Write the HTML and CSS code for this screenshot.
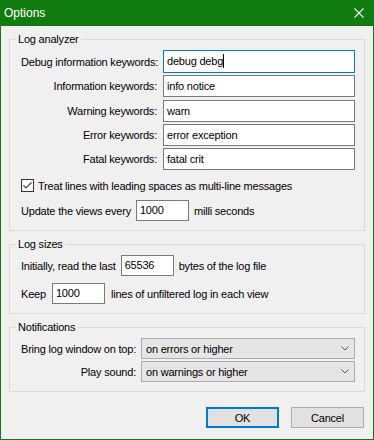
FILE: index.html
```html
<!DOCTYPE html>
<html lang="en">
<head>
    <meta charset="UTF-8">
    <title>Options</title>
    <link rel="stylesheet" href="styles.css">
</head>
<body>
    <div class="window">
        <div class="titlebar">
            <span class="title">Options</span>
            <svg class="close" width="10" height="10" viewBox="0 0 10 10">
                <path d="M0.5 0.5 L9.5 9.5 M9.5 0.5 L0.5 9.5" stroke="#fff" stroke-width="1.1" fill="none"/>
            </svg>
        </div>

        <div class="content">
            <fieldset class="group">
                <legend>Log analyzer</legend>
                <div class="keyword-grid">
                    <span class="label">Debug information keywords:</span>
                    <div class="field focused">debug debg<span class="caret"></span></div>
                    <span class="label">Information keywords:</span>
                    <div class="field">info notice</div>
                    <span class="label">Warning keywords:</span>
                    <div class="field">warn</div>
                    <span class="label">Error keywords:</span>
                    <div class="field">error exception</div>
                    <span class="label">Fatal keywords:</span>
                    <div class="field">fatal crit</div>
                </div>
                <div class="check-row">
                    <span class="checkbox">
                        <svg width="11" height="11" viewBox="0 0 11 11">
                            <path d="M1.5 5.5 L4 8 L9.5 2.5" stroke="#444" stroke-width="1.2" fill="none"/>
                        </svg>
                    </span>
                    <span>Treat lines with leading spaces as multi-line messages</span>
                </div>
                <div class="inline-row update-row">
                    <span>Update the views every</span>
                    <div class="field short">1000</div>
                    <span>milli seconds</span>
                </div>
            </fieldset>

            <fieldset class="group">
                <legend>Log sizes</legend>
                <div class="inline-row">
                    <span>Initially, read the last</span>
                    <div class="field short">65536</div>
                    <span>bytes of the log file</span>
                </div>
                <div class="inline-row keep-row">
                    <span>Keep</span>
                    <div class="field short">1000</div>
                    <span>lines of unfiltered log in each view</span>
                </div>
            </fieldset>

            <fieldset class="group">
                <legend>Notifications</legend>
                <div class="notify-grid">
                    <span class="label">Bring log window on top:</span>
                    <div class="combo">on errors or higher<svg class="chevron" width="8" height="5" viewBox="0 0 8 5"><path d="M0.5 0.5 L4 4 L7.5 0.5" stroke="#555" fill="none"/></svg></div>
                    <span class="label">Play sound:</span>
                    <div class="combo">on warnings or higher<svg class="chevron" width="8" height="5" viewBox="0 0 8 5"><path d="M0.5 0.5 L4 4 L7.5 0.5" stroke="#555" fill="none"/></svg></div>
                </div>
            </fieldset>

            <div class="buttons">
                <button class="btn default">OK</button>
                <button class="btn">Cancel</button>
            </div>
        </div>
    </div>
</body>
</html>
```

FILE: styles.css
```css
* {
    box-sizing: border-box;
    margin: 0;
    padding: 0;
}
body {
    background-color: #f0f0f0;
    font-family: "Liberation Sans", Arial, sans-serif;
    font-size: 11px;
    letter-spacing: -0.2px;
    color: #000;
}
.window {
    width: 374px;
    height: 440px;
    border: 1px solid #107c10;
    border-top: none;
    background-color: #f0f0f0;
    display: flex;
    flex-direction: column;
}
.titlebar {
    height: 26px;
    margin: 0 -1px;
    background-color: #107c10;
    color: #fff;
    display: flex;
    align-items: center;
    justify-content: space-between;
    padding: 0 10px 1px 4px;
}
.title {
    font-size: 12px;
    letter-spacing: 0;
}
.close {
    display: block;
    margin-top: 1px;
}
.content {
    padding: 7px 8px 0 8px;
    display: flex;
    flex-direction: column;
    gap: 7px;
}
.group {
    border: 1px solid #dcdcdc;
    padding: 4px 9px 9px 11px;
}
.group legend {
    line-height: 13px;
    padding: 0 2px;
    margin-left: -5px;
}
.keyword-grid {
    display: grid;
    grid-template-columns: 136px 1fr;
    column-gap: 6px;
    row-gap: 2.25px;
    align-items: center;
}
.label {
    text-align: right;
    white-space: nowrap;
}
.field {
    height: 22px;
    border: 1px solid #7a7a7a;
    background-color: #fff;
    padding: 0 3px;
    line-height: 20px;
    white-space: nowrap;
}
.field.focused {
    border-color: #0078d7;
    height: 23px;
    line-height: 21px;
}
.caret {
    display: inline-block;
    width: 1px;
    height: 14px;
    background-color: #000;
    vertical-align: -3px;
}
.field.short {
    width: 53px;
    height: 21px;
    line-height: 19px;
}
.check-row {
    display: flex;
    align-items: center;
    gap: 4px;
    margin-top: 9px;
    height: 13px;
}
.checkbox {
    width: 13px;
    height: 13px;
    border: 1px solid #333;
    background-color: #fff;
    display: flex;
    align-items: center;
    justify-content: center;
}
.checkbox svg {
    display: block;
}
.inline-row {
    display: flex;
    align-items: center;
    gap: 5px;
}
.update-row {
    margin-top: 8px;
}
.keep-row {
    margin-top: 7px;
    gap: 6px;
}
.notify-grid {
    display: grid;
    grid-template-columns: 115px 1fr;
    column-gap: 5px;
    row-gap: 2px;
    align-items: center;
}
.combo {
    height: 21px;
    border: 1px solid #adadad;
    background-color: #e5e5e5;
    padding: 0 4px;
    display: flex;
    align-items: center;
    justify-content: space-between;
    white-space: nowrap;
}
.chevron {
    display: block;
    margin-right: 1px;
}
.buttons {
    display: flex;
    justify-content: flex-end;
    gap: 12px;
    margin-top: 8px;
    padding-right: 1px;
}
.btn {
    width: 73px;
    height: 21px;
    border: 1px solid #adadad;
    background-color: #e1e1e1;
    font-family: inherit;
    font-size: 11px;
    letter-spacing: -0.2px;
    color: #000;
}
.btn.default {
    border: 2px solid #0078d7;
}
```
